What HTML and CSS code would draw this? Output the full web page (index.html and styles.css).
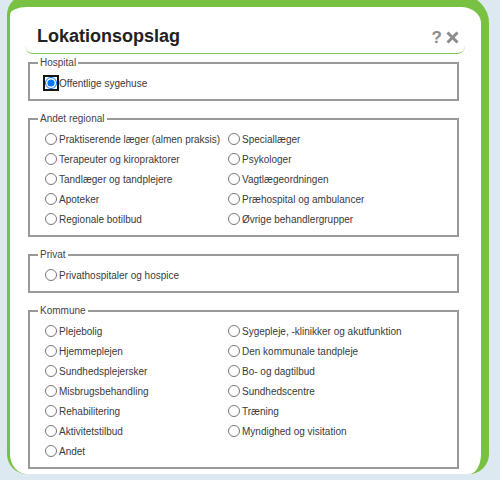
FILE: index.html
```html
<!DOCTYPE html>
<html lang="da">

<head>
    <meta charset="UTF-8">
    <meta name="viewport" content="width=device-width, initial-scale=1.0">
    <title>Lokationsopslag</title>
    <link rel="stylesheet" href="styles.css">
</head>

<body>

    <div class="dialog">
        <!-- Header -->
        <div class="dialog-header">
            <h1>Lokationsopslag</h1>
            <div class="header-icons">
                <span class="help">?</span>
                <svg class="close" width="13" height="13" viewBox="0 0 13 13">
                    <path d="M1.5 1.5 L11.5 11.5 M11.5 1.5 L1.5 11.5" stroke="#8d8d8d" stroke-width="3" fill="none" />
                </svg>
            </div>
        </div>

        <!-- Choices -->
        <div class="dialog-body">
            <fieldset>
                <legend>Hospital</legend>
                <label><input type="radio" name="lok" class="focused" checked>Offentlige sygehuse</label>
            </fieldset>

            <fieldset>
                <legend>Andet regional</legend>
                <div class="options">
                    <label><input type="radio" name="lok">Praktiserende læger (almen praksis)</label>
                    <label><input type="radio" name="lok">Speciallæger</label>
                    <label><input type="radio" name="lok">Terapeuter og kiropraktorer</label>
                    <label><input type="radio" name="lok">Psykologer</label>
                    <label><input type="radio" name="lok">Tandlæger og tandplejere</label>
                    <label><input type="radio" name="lok">Vagtlægeordningen</label>
                    <label><input type="radio" name="lok">Apoteker</label>
                    <label><input type="radio" name="lok">Præhospital og ambulancer</label>
                    <label><input type="radio" name="lok">Regionale botilbud</label>
                    <label><input type="radio" name="lok">Øvrige behandlergrupper</label>
                </div>
            </fieldset>

            <fieldset>
                <legend>Privat</legend>
                <label><input type="radio" name="lok">Privathospitaler og hospice</label>
            </fieldset>

            <fieldset>
                <legend>Kommune</legend>
                <div class="options">
                    <label><input type="radio" name="lok">Plejebolig</label>
                    <label><input type="radio" name="lok">Sygepleje, -klinikker og akutfunktion</label>
                    <label><input type="radio" name="lok">Hjemmeplejen</label>
                    <label><input type="radio" name="lok">Den kommunale tandpleje</label>
                    <label><input type="radio" name="lok">Sundhedsplejersker</label>
                    <label><input type="radio" name="lok">Bo- og dagtilbud</label>
                    <label><input type="radio" name="lok">Misbrugsbehandling</label>
                    <label><input type="radio" name="lok">Sundhedscentre</label>
                    <label><input type="radio" name="lok">Rehabilitering</label>
                    <label><input type="radio" name="lok">Træning</label>
                    <label><input type="radio" name="lok">Aktivitetstilbud</label>
                    <label><input type="radio" name="lok">Myndighed og visitation</label>
                    <label><input type="radio" name="lok">Andet</label>
                </div>
            </fieldset>
        </div>
    </div>

</body>

</html>
```

FILE: styles.css
```css
body {
    font-family: 'Liberation Sans', Arial, sans-serif;
    background-color: #dce9f1;
    color: #3a3a3a;
    margin: 0;
    overflow: hidden;
}

.dialog {
    box-sizing: border-box;
    width: 482px;
    height: 479px;
    margin: -5px 0 0 7px;
    background-color: #fff;
    border-style: solid;
    border-color: #79c143;
    border-width: 12px 8px 0 3px;
    border-radius: 20px 28px 20px 20px;
    overflow: hidden;
}

.dialog-header {
    display: flex;
    align-items: center;
    margin: 0 16px 0 15px;
    padding: 18px 6px 6px 12px;
    border-bottom: 1px solid #8cc858;
    border-radius: 0 0 8px 8px;
}

.dialog-header h1 {
    flex: 1;
    margin: 0;
    font-size: 18px;
    line-height: 22px;
    color: #222;
}

.header-icons {
    display: flex;
    align-items: center;
    margin-top: 3px;
}

.help {
    font-size: 17px;
    font-weight: bold;
    line-height: 16px;
    color: #8d8d8d;
    margin-right: 4px;
}

.close {
    display: block;
}

.dialog-body {
    padding: 3px 22px 0 18px;
}

fieldset {
    margin: 0 0 12px 0;
    padding: 5px 8px 5px 8px;
    border: 2px solid #999;
}

legend {
    font-size: 10px;
    line-height: 12px;
    padding: 0 2px;
    color: #444;
}

.options {
    display: grid;
    grid-template-columns: 183px 1fr;
}

label {
    display: block;
    font-size: 10px;
    line-height: 20px;
    white-space: nowrap;
}

input[type="radio"] {
    width: 12px;
    height: 12px;
    margin: 0 2px 0 7px;
    vertical-align: -2px;
}

/* ring shown round the selected choice */
.focused {
    outline: 2px solid #161616;
    outline-offset: 0;
    border-radius: 3px;
}
```
